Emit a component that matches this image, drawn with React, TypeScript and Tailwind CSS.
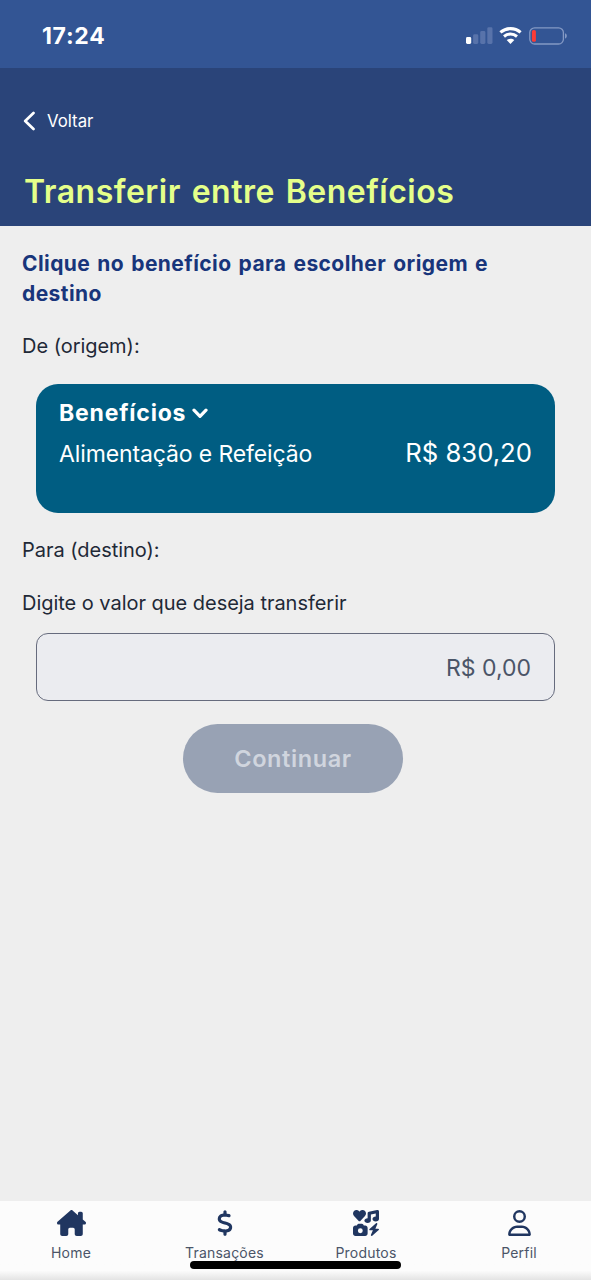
import React, { useState } from 'react'
import { FaDollarSign, FaHouseChimney, FaIcons, FaRegUser } from 'react-icons/fa6'

const navItems = [
  { label: 'Home', icon: FaHouseChimney, iconClass: 'w-[29px] h-[26px]', itemClass: 'w-[142px]' },
  { label: 'Transações', icon: FaDollarSign, iconClass: 'w-[16px] h-[26px]', itemClass: 'w-[165px]' },
  { label: 'Produtos', icon: FaIcons, iconClass: 'w-[26px] h-[26px]', itemClass: 'w-[118px]' },
  { label: 'Perfil', icon: FaRegUser, iconClass: 'w-[23px] h-[26px]', itemClass: 'w-[166px] pl-[22px]' },
]

const SignalIcon = () => (
  <svg width="27" height="17" viewBox="0 0 27 17">
    <rect x="0" y="10" width="5.2" height="7" rx="1.4" fill="#fff" />
    <rect x="7.1" y="7.3" width="5.2" height="9.7" rx="1.4" fill="#5873aa" />
    <rect x="14.2" y="4" width="5.2" height="13" rx="1.4" fill="#5873aa" />
    <rect x="21.3" y="0.3" width="5.2" height="16.7" rx="1.4" fill="#5873aa" />
  </svg>
)

const WifiIcon = () => (
  <svg width="23" height="17" viewBox="0 0 23 17" fill="none" stroke="#fff">
    <path d="M1.4 5.4C7.2.3 15.8.3 21.6 5.4" strokeWidth="3.1" />
    <path d="M5 9.5c3.8-3.2 9.2-3.2 13 0" strokeWidth="3" />
    <path d="M11.5 17 7.7 13.1c2.1-1.8 5.5-1.8 7.6 0z" fill="#fff" stroke="none" />
  </svg>
)

const BatteryIcon = () => (
  <svg width="39" height="18" viewBox="0 0 39 18">
    <rect x="0.8" y="0.8" width="33.6" height="16.2" rx="4.8" fill="none" stroke="#8499c4" strokeWidth="1.3" />
    <rect x="2.9" y="3" width="4" height="11.8" rx="1.6" fill="#fb3b36" />
    <path d="M36 6.2c2.4.8 2.4 4.6 0 5.4z" fill="#8499c4" />
  </svg>
)

const App = () => {
  const [amount, setAmount] = useState('R$ 0,00');

  return (
    <div className="flex h-[1280px] w-[591px] flex-col overflow-hidden bg-[#eeeeee] font-[Inter,sans-serif]">
      <div className="flex h-[68px] shrink-0 items-center justify-between bg-[#335594] pl-[42px] pr-[23px] pt-[3px]">
        <span className="pt-[2px] text-[23px] font-bold leading-none tracking-[0.7px] text-white">17:24</span>
        <div className="flex items-center">
          <SignalIcon />
          <div className="ml-[6px]"><WifiIcon /></div>
          <div className="ml-[7px]"><BatteryIcon /></div>
        </div>
      </div>

      <header className="h-[158px] shrink-0 bg-[#2a4479] px-6 pt-[41px]">
        <button className="-ml-px flex h-6 items-center text-white">
          <svg width="12" height="20" viewBox="0 0 12 20" fill="none">
            <path d="M10.5 2 2.2 10l8.3 8" stroke="#fff" strokeWidth="2.7" strokeLinecap="round" strokeLinejoin="round" />
          </svg>
          <span className="ml-[12px] text-[16.8px] leading-6">Voltar</span>
        </button>
        <h1 className="mt-[39px] whitespace-nowrap text-[32px] font-semibold leading-10 tracking-[0.5px] text-[#e5ff8a] [word-spacing:2.2px]">Transferir entre Benefícios</h1>
      </header>

      <main className="flex flex-1 flex-col px-[22px] pt-[23px] text-[#1f2937]">
        <h2 className="text-[21px] font-bold leading-[30px] tracking-[0.42px] text-[#18357b] [word-spacing:1.7px]">
          Clique no benefício para escolher origem e<br />destino
        </h2>
        <p className="mt-[22px] text-[20px] leading-[30px] tracking-[-0.03px]">De (origem):</p>

        <div className="mx-[14px] mt-[23px] h-[129px] rounded-[22px] bg-[#005d82] px-[23px] pt-[11px] text-white">
          <button className="flex h-9 items-center text-[23px] font-bold tracking-[0.8px]">
            Benefícios
            <svg className="ml-[6px] mt-px" width="16" height="11" viewBox="0 0 16 11" fill="none">
              <path d="m2 2.2 6 6.1 6-6.1" stroke="#fff" strokeWidth="3.2" strokeLinecap="round" strokeLinejoin="round" />
            </svg>
          </button>
          <div className="mt-[5px] flex h-9 items-center justify-between">
            <span className="text-[23px] tracking-[-0.12px]">Alimentação e Refeição</span>
            <span className="-mt-[2px] text-[25.7px]">R$ 830,20</span>
          </div>
        </div>

        <p className="mt-[22px] text-[20px] leading-[30px] tracking-[-0.03px]">Para (destino):</p>
        <p className="mt-[23px] text-[20px] leading-[30px] tracking-[-0.03px]">Digite o valor que deseja transferir</p>

        <input
          className="mx-[14px] mt-[15px] h-[68px] rounded-xl border border-[#666b7d] bg-[#ebecf0] px-[23px] pt-[2px] text-right text-[23px] text-[#4b5568] outline-none"
          value={amount}
          onChange={(e) => setAmount(e.target.value)}
        />

        <button disabled className="ml-[161px] mt-[23px] h-[69px] w-[220px] rounded-full bg-[#98a2b4] text-[23.5px] font-semibold tracking-[0.6px] text-[#d0d5de]">
          Continuar
        </button>
      </main>

      <nav className="relative flex h-[79px] shrink-0 bg-[#fcfcfc] bg-linear-to-b from-[#fcfcfc] from-88% to-[#e4e4e4] pt-[9px]">
        {navItems.map(({ label, icon: Icon, iconClass, itemClass }) => (
          <button key={label} className={`flex flex-col items-center ${itemClass}`}>
            <Icon className={`text-[#203660] ${iconClass}`} />
            <span className="mt-[7px] text-[14px] leading-5 tracking-[0.2px] text-[#4b5568]">{label}</span>
          </button>
        ))}
        {/* iOS home indicator */}
        <div className="absolute left-[190px] top-[60px] h-[8px] w-[211px] rounded-full bg-black" />
      </nav>
    </div>
  )
}

export default App
